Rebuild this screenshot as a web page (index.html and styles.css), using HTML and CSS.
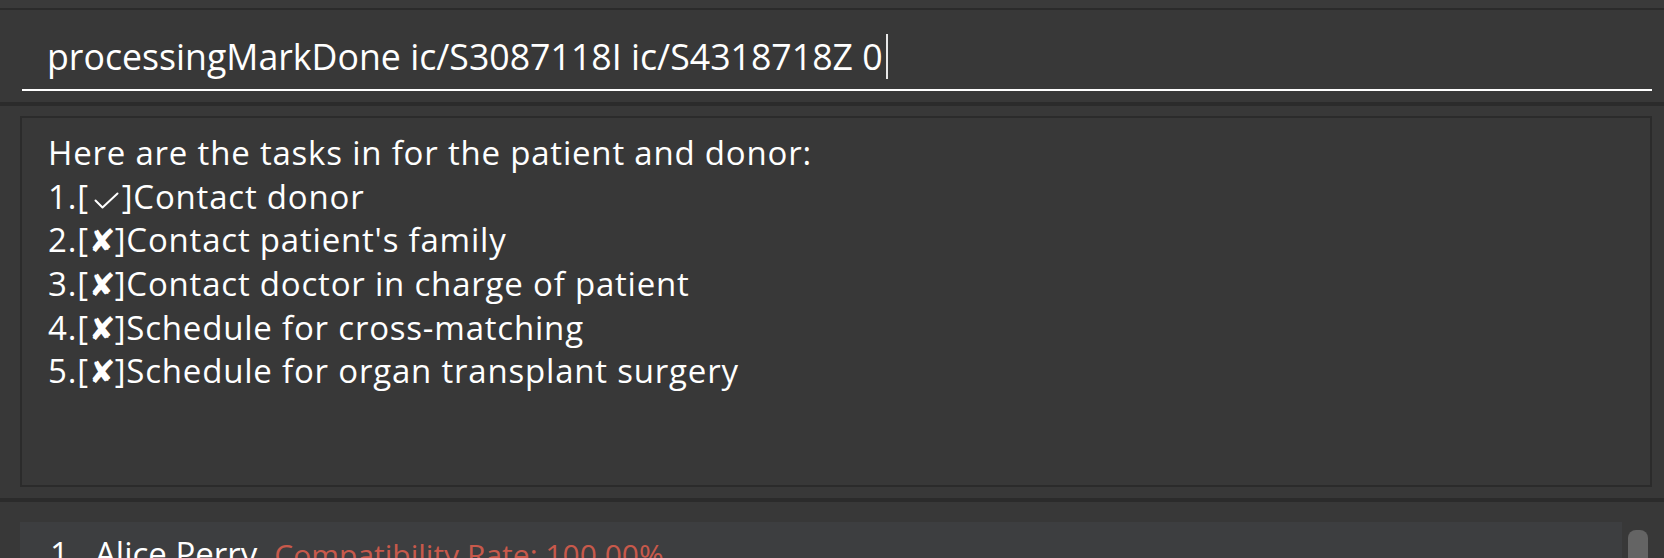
FILE: index.html
```html
<!DOCTYPE html>
<html>
<head>
<meta charset="utf-8">
<link rel="stylesheet" href="styles.css">
</head>
<body>
<div class="app">
  <div class="topstrip"></div>
  <div class="command">
    <div class="input"><span class="cmd">processingMarkDone ic/S3087118I ic/S4318718Z 0</span><span class="caret"></span></div>
  </div>
  <div class="result-pane">
    <div class="result-box">
      <div class="line">Here are the tasks in for the patient and donor:</div>
      <div class="line">1.[<svg class="check" width="25" height="17" viewBox="0 0 25 17"><polyline points="1.5,8.5 8.5,15.5 23.5,1.5" fill="none" stroke="#ffffff" stroke-width="2" stroke-linecap="round" stroke-linejoin="round"/></svg>]Contact donor</div>
      <div class="line">2.[<span class="mark">✘</span>]Contact patient's family</div>
      <div class="line">3.[<span class="mark">✘</span>]Contact doctor in charge of patient</div>
      <div class="line">4.[<span class="mark">✘</span>]Schedule for cross-matching</div>
      <div class="line">5.[<span class="mark">✘</span>]Schedule for organ transplant surgery</div>
    </div>
  </div>
  <div class="list-pane">
    <div class="card">
      <span class="idx">1.</span><span class="name">Alice Perry</span><span class="rate">Compatibility Rate: 100.00%</span>
    </div>
    <div class="scrollbar"><div class="thumb"></div></div>
  </div>
</div>
</body>
</html>
```
FILE: styles.css
```css
html, body {
  margin: 0;
  padding: 0;
  background: #383838;
  height: 558px;
  overflow: hidden;
}
.app {
  font-family: "Open Sans", "Lato", sans-serif;
  color: #ffffff;
  display: flex;
  flex-direction: column;
}
.topstrip {
  height: 8px;
  background: #3a3a3a;
  border-bottom: 2px solid #2b2b2b;
}
.command {
  height: 92px;
  padding: 0 12px 11px 22px;
  box-sizing: border-box;
  display: flex;
  align-items: flex-end;
}
.input {
  flex: 1;
  border-bottom: 2px solid #ffffff;
  height: 66px;
  display: flex;
  align-items: center;
  padding-left: 25px;
  padding-bottom: 2px;
  box-sizing: border-box;
  font-size: 35.7px;
  line-height: 48px;
}
.caret {
  display: inline-block;
  width: 2px;
  height: 45px;
  background: #e8e8e8;
  margin-left: 3px;
}
.result-pane {
  border-top: 4px solid #2b2b2b;
  height: 396px;
  box-sizing: border-box;
  padding: 10px 12px 11px 20px;
  display: flex;
}
.result-box {
  flex: 1;
  border: 2px solid #2b2b2b;
  padding: 13px 26px;
  font-size: 33px;
  letter-spacing: 0.8px;
  line-height: 43.7px;
}
.line {
  height: 43.7px;
}
.check {
  margin: 0 3px 0 5px;
  vertical-align: 0;
}
.mark {
  display: inline-block;
  width: 26px;
  font-family: "DejaVu Sans", sans-serif;
  font-size: 32px;
  line-height: 0;
  text-align: center;
  letter-spacing: 0;
}
.list-pane {
  border-top: 4px solid #2b2b2b;
  padding: 20px 16px 0 20px;
  display: flex;
  gap: 6px;
  height: 52px;
  box-sizing: border-box;
}
.card {
  flex: 1;
  background: #3d3e40;
  height: 60px;
  padding: 9px 0 0 30px;
  box-sizing: border-box;
  font-size: 33px;
  display: flex;
  align-items: baseline;
}
.idx { width: 45px; }
.name { margin-right: 17px; }
.rate { color: #c8594b; font-size: 30px; }
.scrollbar {
  width: 20px;
  padding-top: 8px;
}
.thumb {
  height: 60px;
  background: #646464;
  border-radius: 8px;
}
```
